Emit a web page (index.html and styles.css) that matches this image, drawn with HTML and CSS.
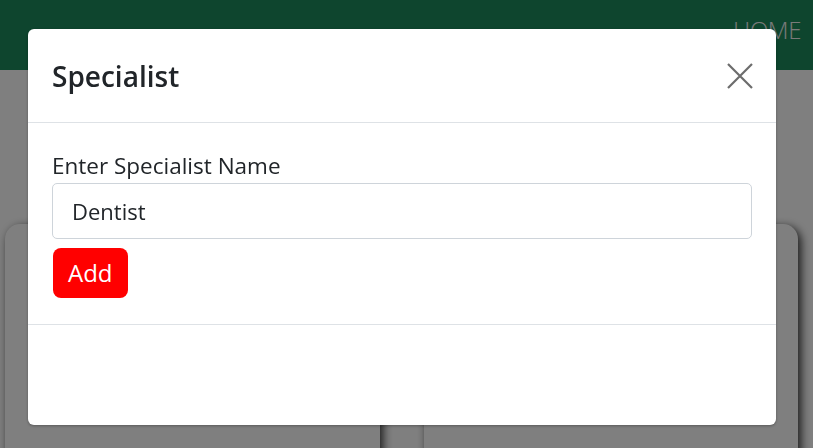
FILE: index.html
```html
<!DOCTYPE html>
<html lang="en">
<head>
<meta charset="utf-8">
<title>Specialist</title>
<link rel="stylesheet" href="styles.css">
</head>
<body>
<nav class="navbar">
  <a class="nav-link" href="#">HOME</a>
</nav>
<main class="content">
  <div class="card"></div>
  <div class="card"></div>
</main>
<div class="backdrop"></div>
<div class="modal">
  <div class="modal-header">
    <h5 class="modal-title">Specialist</h5>
    <button class="close-btn" type="button" aria-label="Close">
      <svg width="26" height="26" viewBox="0 0 26 26"><path d="M1 1 L25 25 M25 1 L1 25" stroke="#6c6c6c" stroke-width="2.2" fill="none"/></svg>
    </button>
  </div>
  <div class="modal-body">
    <label class="form-label" for="sp">Enter Specialist Name</label>
    <input class="form-control" id="sp" type="text" value="Dentist">
    <button class="btn-add" type="button">Add</button>
  </div>
  <div class="modal-footer"></div>
</div>
</body>
</html>
```
FILE: styles.css
```css
* { box-sizing: border-box; }
html, body { margin: 0; padding: 0; }
body {
  font-family: "Open Sans", "Noto Sans", sans-serif;
  background: #ffffff;
  color: #212529;
  width: 813px;
  height: 448px;
  overflow: hidden;
}
.navbar {
  height: 70px;
  background: #1c8b5c;
  display: flex;
  justify-content: flex-end;
  align-items: flex-start;
  padding: 13px 12px 0 0;
}
.nav-link {
  color: #f4f4f4;
  text-decoration: none;
  font-size: 24px;
  font-weight: 300;
  letter-spacing: -0.4px;
}
.content {
  display: grid;
  grid-template-columns: 375px 374px;
  column-gap: 44px;
  padding: 154px 0 0 5px;
}
.card {
  height: 240px;
  background: #ffffff;
  border-radius: 15px;
  box-shadow: 3px 3px 10px rgba(0,0,0,0.8);
}
.backdrop {
  position: fixed;
  inset: 0;
  background: rgba(0,0,0,0.5);
}
.modal {
  position: fixed;
  left: 28px;
  top: 29px;
  width: 748px;
  height: 396px;
  background: #ffffff;
  border-radius: 6px;
  box-shadow: 0 1px 3px rgba(0,0,0,0.3);
  display: flex;
  flex-direction: column;
}
.modal-header {
  height: 94px;
  border-bottom: 1px solid #dee2e6;
  display: flex;
  align-items: center;
  justify-content: space-between;
  padding: 0 23px 0 24px;
}
.modal-title {
  margin: 0;
  font-size: 28px;
  line-height: 36px;
  font-weight: 600;
  color: #212529;
}
.close-btn {
  border: 0;
  background: none;
  padding: 0;
  width: 26px;
  height: 26px;
  display: flex;
}
.modal-body {
  padding: 27px 24px 26px;
  border-bottom: 1px solid #dee2e6;
  display: flex;
  flex-direction: column;
  align-items: flex-start;
}
.form-label {
  font-size: 22.5px;
  line-height: 31px;
  height: 33px;
}
.form-control {
  width: 100%;
  height: 56px;
  border: 1px solid #ced4da;
  border-radius: 5px;
  padding: 0 19px;
  font-family: inherit;
  font-size: 22px;
  color: #212529;
}
.btn-add {
  margin-top: 9px;
  margin-left: 1px;
  height: 50px;
  padding: 0 15px;
  border: 0;
  border-radius: 8px;
  background: #ff0000;
  color: #ffffff;
  font-family: inherit;
  font-size: 24px;
  line-height: 1;
}
.modal-footer {
  flex: 1;
}
```
